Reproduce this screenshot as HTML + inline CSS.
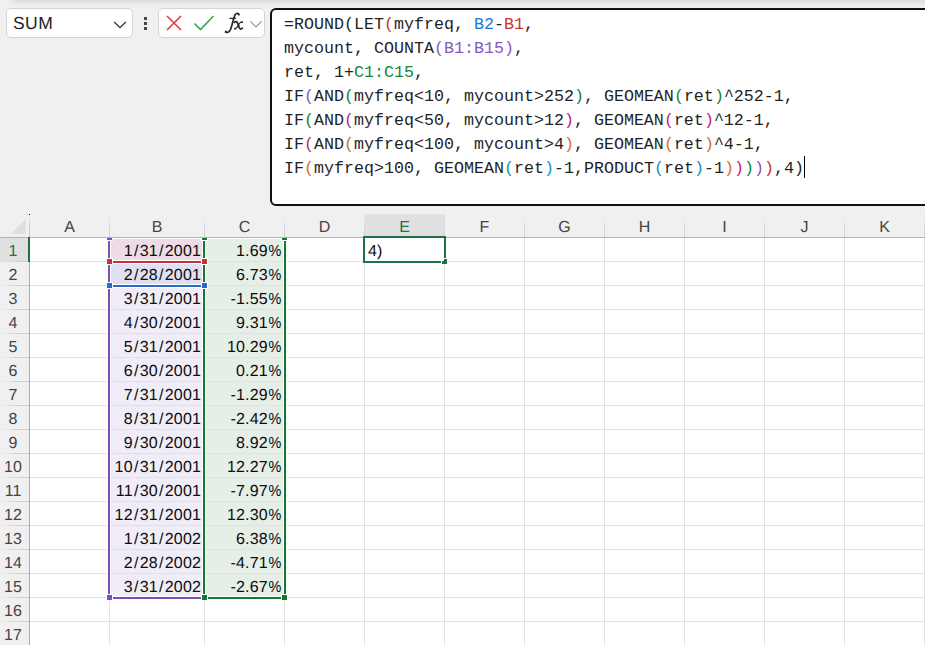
<!DOCTYPE html>
<html><head><meta charset="utf-8"><title>Excel</title>
<style>
html,body{margin:0;padding:0;}
body{width:925px;height:645px;overflow:hidden;background:#f0f0f0;position:relative;font-family:"Liberation Sans",sans-serif;}
.abs{position:absolute;}
.box{position:absolute;background:#fff;border:1px solid #d4d4d4;border-radius:5px;box-sizing:border-box;}
#fbar{position:absolute;left:270px;top:8px;width:680px;height:198px;background:#fff;border:2px solid #111;border-radius:6px;box-sizing:border-box;}
#ftext{position:absolute;left:284px;top:13px;font-family:"Liberation Mono",monospace;font-size:16.67px;line-height:24px;color:#1f1f1f;white-space:pre;}
#grid{position:absolute;left:0;top:214px;width:925px;height:431px;}
.ch{position:absolute;top:214px;height:23px;line-height:27px;text-rendering:geometricPrecision;text-align:center;font-size:16px;color:#444;}
.rh{position:absolute;left:0;width:29px;height:24px;line-height:27px;text-rendering:geometricPrecision;font-size:16px;color:#444;text-align:left;}
.cell{position:absolute;height:24px;line-height:27px;text-rendering:geometricPrecision;font-size:16px;letter-spacing:0.15px;color:#0c0c0c;text-align:right;white-space:nowrap;}
.sl{margin:0 1.2px}
.pc{display:inline-block;transform:scaleX(0.9);transform-origin:right center;margin-left:-1px;letter-spacing:0}
.vl{position:absolute;width:1px;background:#e1e1e1;}
.hl{position:absolute;height:1px;background:#e1e1e1;}
.p1{color:#c0392b}.c-blue{color:#2f6fc4}.c-red{color:#c0392b}.c-pur{color:#8e5bbd}.c-grn{color:#1e8a3c}
</style></head><body>

<div class="abs" style="left:12px;top:-12px;width:930px;height:12px;border-radius:8px;box-shadow:0 0 7px 1px rgba(0,0,0,0.14)"></div>
<div class="box" style="left:6px;top:8px;width:127px;height:30px;"></div>
<div class="abs" style="left:13px;top:12px;font-size:17.5px;text-rendering:geometricPrecision;letter-spacing:0.45px;line-height:22px;color:#222;">SUM</div>
<svg class="abs" style="left:111px;top:17.5px" width="18" height="12" viewBox="0 0 18 12"><path d="M3.2 4 L9 9.6 L14.8 4" fill="none" stroke="#333" stroke-width="1.3"/></svg>
<div class="abs" style="left:144px;top:17px;width:3px;height:3px;background:#444"></div>
<div class="abs" style="left:144px;top:22px;width:3px;height:3px;background:#444"></div>
<div class="abs" style="left:144px;top:27px;width:3px;height:3px;background:#444"></div>
<div class="box" style="left:158px;top:8px;width:107px;height:30px;"></div>
<svg class="abs" style="left:164px;top:13px" width="20" height="20" viewBox="0 0 20 20"><path d="M3 3 L17 17 M17 3 L3 17" fill="none" stroke="#e63c3c" stroke-width="1.6"/></svg>
<svg class="abs" style="left:192px;top:13px" width="24" height="20" viewBox="0 0 24 20"><path d="M2.5 10.5 L8.5 16.5 L21.5 3" fill="none" stroke="#3aa44d" stroke-width="1.6"/></svg>
<svg class="abs" style="left:220px;top:8px" width="28" height="30" viewBox="0 0 28 30" fill="none" stroke="#2b2b2b" stroke-linecap="round" stroke-linejoin="round"><path d="M18.9 6.6 C18.3 4.9 16 4.7 14.9 7.2 C13.9 9.6 12 17 10.7 21 C9.7 24 7.6 25.2 5.6 23.9" stroke-width="1.75"/><circle cx="18.7" cy="6.4" r="0.9" fill="#2b2b2b" stroke="none"/><circle cx="5.9" cy="23.6" r="1" fill="#2b2b2b" stroke="none"/><path d="M9.9 10.4 L15.6 10.4" stroke-width="1.1"/><path d="M14.4 14.3 C15.8 13.1 17 13.5 17.7 15.4 L19.3 19.6 C20 21.3 21 21.5 22.4 20.2" stroke-width="1.8"/><path d="M22.3 14.1 C21 13.3 20 14.5 18.5 17 C17 19.6 16 21.5 14.6 20.8" stroke-width="1.1"/><circle cx="22.1" cy="14.2" r="0.9" fill="#2b2b2b" stroke="none"/><circle cx="14.9" cy="20.6" r="0.9" fill="#2b2b2b" stroke="none"/></svg>
<svg class="abs" style="left:248px;top:18px" width="16" height="12" viewBox="0 0 16 12"><path d="M2.5 3.5 L8 9 L13.5 3.5" fill="none" stroke="#9a9a9a" stroke-width="1.2"/></svg>
<div id="fbar"></div>
<div id="ftext">=ROUND(LET<span style="color:#cc3535">(</span>myfreq, <span style="color:#1c78d0">B2</span>-<span style="color:#cc3535">B1</span>,
mycount, COUNTA<span style="color:#8859bd">(B1:B15)</span>,
ret, 1+<span style="color:#16853a">C1:C15</span>,
IF<span style="color:#8859bd">(</span>AND<span style="color:#16853a">(</span>myfreq&lt;10, mycount&gt;252<span style="color:#16853a">)</span>, GEOMEAN<span style="color:#16853a">(</span>ret<span style="color:#16853a">)</span>^252-1,
IF<span style="color:#16853a">(</span>AND<span style="color:#c41c8c">(</span>myfreq&lt;50, mycount&gt;12<span style="color:#c41c8c">)</span>, GEOMEAN<span style="color:#c41c8c">(</span>ret<span style="color:#c41c8c">)</span>^12-1,
IF<span style="color:#c41c8c">(</span>AND<span style="color:#d07034">(</span>myfreq&lt;100, mycount&gt;4<span style="color:#d07034">)</span>, GEOMEAN<span style="color:#d07034">(</span>ret<span style="color:#d07034">)</span>^4-1,
IF<span style="color:#d07034">(</span>myfreq&gt;100, GEOMEAN<span style="color:#1492b8">(</span>ret<span style="color:#1492b8">)</span>-1,PRODUCT<span style="color:#1492b8">(</span>ret<span style="color:#1492b8">)</span>-1<span style="color:#d07034">)</span><span style="color:#c41c8c">)</span><span style="color:#16853a">)</span><span style="color:#8859bd">)</span><span style="color:#cc3535">)</span>,4)</div>
<div class="abs" style="left:804px;top:156px;width:1px;height:22px;background:#000"></div>
<div class="abs" style="left:30px;top:238px;width:895px;height:407px;background:#fff"></div>
<div class="abs" style="left:0;top:238px;width:28px;height:24px;background:#e0e0e0"></div>
<div class="abs" style="left:365px;top:214px;width:80px;height:23px;background:#e0e0e0"></div>
<div class="abs" style="left:111px;top:239px;width:91px;height:357px;background:#f0ecf8"></div>
<div class="abs" style="left:111px;top:239px;width:91px;height:22px;background:#eddbe5"></div>
<div class="abs" style="left:111px;top:263px;width:91px;height:22px;background:#dfe0f2"></div>
<div class="abs" style="left:206px;top:239px;width:77px;height:357px;background:#e6efe7"></div>
<div class="vl" style="left:109px;top:238px;height:407px"></div>
<div class="vl" style="left:204px;top:238px;height:407px"></div>
<div class="vl" style="left:284px;top:238px;height:407px"></div>
<div class="vl" style="left:364px;top:238px;height:407px"></div>
<div class="vl" style="left:444px;top:238px;height:407px"></div>
<div class="vl" style="left:524px;top:238px;height:407px"></div>
<div class="vl" style="left:604px;top:238px;height:407px"></div>
<div class="vl" style="left:684px;top:238px;height:407px"></div>
<div class="vl" style="left:764px;top:238px;height:407px"></div>
<div class="vl" style="left:844px;top:238px;height:407px"></div>
<div class="vl" style="left:924px;top:238px;height:407px"></div>
<div class="hl" style="left:30px;top:261px;width:895px"></div>
<div class="hl" style="left:0px;top:261px;width:29px;background:linear-gradient(to right,rgba(205,205,205,0),#d6d6d6 50%,#c8c8c8)"></div>
<div class="hl" style="left:30px;top:285px;width:895px"></div>
<div class="hl" style="left:0px;top:285px;width:29px;background:linear-gradient(to right,rgba(205,205,205,0),#d6d6d6 50%,#c8c8c8)"></div>
<div class="hl" style="left:30px;top:309px;width:895px"></div>
<div class="hl" style="left:0px;top:309px;width:29px;background:linear-gradient(to right,rgba(205,205,205,0),#d6d6d6 50%,#c8c8c8)"></div>
<div class="hl" style="left:30px;top:333px;width:895px"></div>
<div class="hl" style="left:0px;top:333px;width:29px;background:linear-gradient(to right,rgba(205,205,205,0),#d6d6d6 50%,#c8c8c8)"></div>
<div class="hl" style="left:30px;top:357px;width:895px"></div>
<div class="hl" style="left:0px;top:357px;width:29px;background:linear-gradient(to right,rgba(205,205,205,0),#d6d6d6 50%,#c8c8c8)"></div>
<div class="hl" style="left:30px;top:381px;width:895px"></div>
<div class="hl" style="left:0px;top:381px;width:29px;background:linear-gradient(to right,rgba(205,205,205,0),#d6d6d6 50%,#c8c8c8)"></div>
<div class="hl" style="left:30px;top:405px;width:895px"></div>
<div class="hl" style="left:0px;top:405px;width:29px;background:linear-gradient(to right,rgba(205,205,205,0),#d6d6d6 50%,#c8c8c8)"></div>
<div class="hl" style="left:30px;top:429px;width:895px"></div>
<div class="hl" style="left:0px;top:429px;width:29px;background:linear-gradient(to right,rgba(205,205,205,0),#d6d6d6 50%,#c8c8c8)"></div>
<div class="hl" style="left:30px;top:453px;width:895px"></div>
<div class="hl" style="left:0px;top:453px;width:29px;background:linear-gradient(to right,rgba(205,205,205,0),#d6d6d6 50%,#c8c8c8)"></div>
<div class="hl" style="left:30px;top:477px;width:895px"></div>
<div class="hl" style="left:0px;top:477px;width:29px;background:linear-gradient(to right,rgba(205,205,205,0),#d6d6d6 50%,#c8c8c8)"></div>
<div class="hl" style="left:30px;top:501px;width:895px"></div>
<div class="hl" style="left:0px;top:501px;width:29px;background:linear-gradient(to right,rgba(205,205,205,0),#d6d6d6 50%,#c8c8c8)"></div>
<div class="hl" style="left:30px;top:525px;width:895px"></div>
<div class="hl" style="left:0px;top:525px;width:29px;background:linear-gradient(to right,rgba(205,205,205,0),#d6d6d6 50%,#c8c8c8)"></div>
<div class="hl" style="left:30px;top:549px;width:895px"></div>
<div class="hl" style="left:0px;top:549px;width:29px;background:linear-gradient(to right,rgba(205,205,205,0),#d6d6d6 50%,#c8c8c8)"></div>
<div class="hl" style="left:30px;top:573px;width:895px"></div>
<div class="hl" style="left:0px;top:573px;width:29px;background:linear-gradient(to right,rgba(205,205,205,0),#d6d6d6 50%,#c8c8c8)"></div>
<div class="hl" style="left:30px;top:597px;width:895px"></div>
<div class="hl" style="left:0px;top:597px;width:29px;background:linear-gradient(to right,rgba(205,205,205,0),#d6d6d6 50%,#c8c8c8)"></div>
<div class="hl" style="left:30px;top:621px;width:895px"></div>
<div class="hl" style="left:0px;top:621px;width:29px;background:linear-gradient(to right,rgba(205,205,205,0),#d6d6d6 50%,#c8c8c8)"></div>
<div class="hl" style="left:30px;top:645px;width:895px"></div>
<div class="hl" style="left:0px;top:645px;width:29px;background:linear-gradient(to right,rgba(205,205,205,0),#d6d6d6 50%,#c8c8c8)"></div>
<div class="abs" style="left:29px;top:238px;width:1px;height:407px;background:#ababab"></div>
<div class="abs" style="left:109px;top:214px;width:1px;height:23px;background:linear-gradient(rgba(210,210,210,0),#d8d8d8 60%,#d0d0d0)"></div>
<div class="abs" style="left:204px;top:214px;width:1px;height:23px;background:linear-gradient(rgba(210,210,210,0),#d8d8d8 60%,#d0d0d0)"></div>
<div class="abs" style="left:284px;top:214px;width:1px;height:23px;background:linear-gradient(rgba(210,210,210,0),#d8d8d8 60%,#d0d0d0)"></div>
<div class="abs" style="left:364px;top:214px;width:1px;height:23px;background:linear-gradient(rgba(210,210,210,0),#d8d8d8 60%,#d0d0d0)"></div>
<div class="abs" style="left:444px;top:214px;width:1px;height:23px;background:linear-gradient(rgba(210,210,210,0),#d8d8d8 60%,#d0d0d0)"></div>
<div class="abs" style="left:524px;top:214px;width:1px;height:23px;background:linear-gradient(rgba(210,210,210,0),#d8d8d8 60%,#d0d0d0)"></div>
<div class="abs" style="left:604px;top:214px;width:1px;height:23px;background:linear-gradient(rgba(210,210,210,0),#d8d8d8 60%,#d0d0d0)"></div>
<div class="abs" style="left:684px;top:214px;width:1px;height:23px;background:linear-gradient(rgba(210,210,210,0),#d8d8d8 60%,#d0d0d0)"></div>
<div class="abs" style="left:764px;top:214px;width:1px;height:23px;background:linear-gradient(rgba(210,210,210,0),#d8d8d8 60%,#d0d0d0)"></div>
<div class="abs" style="left:844px;top:214px;width:1px;height:23px;background:linear-gradient(rgba(210,210,210,0),#d8d8d8 60%,#d0d0d0)"></div>
<div class="abs" style="left:924px;top:214px;width:1px;height:23px;background:linear-gradient(rgba(210,210,210,0),#d8d8d8 60%,#d0d0d0)"></div>
<div class="abs" style="left:0;top:237px;width:925px;height:1px;background:#b4b4b4"></div>
<div class="abs" style="left:29px;top:215px;width:1px;height:22px;background:linear-gradient(rgba(200,200,200,0),#cfcfcf 50%,#c4c4c4)"></div>
<svg class="abs" style="left:10px;top:217px" width="18" height="18" viewBox="0 0 18 18"><path d="M16 1.5 L16 17 L0.8 17 Z" fill="#e0e0e0"/></svg>
<div class="abs" style="left:29px;top:214px;width:1px;height:1px;background:#000"></div>
<div class="ch" style="left:30px;width:79px;color:#444">A</div>
<div class="ch" style="left:110px;width:94px;color:#444">B</div>
<div class="ch" style="left:205px;width:79px;color:#444">C</div>
<div class="ch" style="left:285px;width:79px;color:#444">D</div>
<div class="ch" style="left:365px;width:79px;color:#217346">E</div>
<div class="ch" style="left:445px;width:79px;color:#444">F</div>
<div class="ch" style="left:525px;width:79px;color:#444">G</div>
<div class="ch" style="left:605px;width:79px;color:#444">H</div>
<div class="ch" style="left:685px;width:79px;color:#444">I</div>
<div class="ch" style="left:765px;width:79px;color:#444">J</div>
<div class="ch" style="left:845px;width:79px;color:#444">K</div>
<div class="rh" style="top:238px;color:#217346;width:26px;text-align:center">1</div>
<div class="rh" style="top:262px;color:#444;width:26px;text-align:center">2</div>
<div class="rh" style="top:286px;color:#444;width:26px;text-align:center">3</div>
<div class="rh" style="top:310px;color:#444;width:26px;text-align:center">4</div>
<div class="rh" style="top:334px;color:#444;width:26px;text-align:center">5</div>
<div class="rh" style="top:358px;color:#444;width:26px;text-align:center">6</div>
<div class="rh" style="top:382px;color:#444;width:26px;text-align:center">7</div>
<div class="rh" style="top:406px;color:#444;width:26px;text-align:center">8</div>
<div class="rh" style="top:430px;color:#444;width:26px;text-align:center">9</div>
<div class="rh" style="top:454px;color:#444;width:26px;text-align:center">10</div>
<div class="rh" style="top:478px;color:#444;width:26px;text-align:center">11</div>
<div class="rh" style="top:502px;color:#444;width:26px;text-align:center">12</div>
<div class="rh" style="top:526px;color:#444;width:26px;text-align:center">13</div>
<div class="rh" style="top:550px;color:#444;width:26px;text-align:center">14</div>
<div class="rh" style="top:574px;color:#444;width:26px;text-align:center">15</div>
<div class="rh" style="top:598px;color:#444;width:26px;text-align:center">16</div>
<div class="rh" style="top:622px;color:#444;width:26px;text-align:center">17</div>
<div class="cell" style="left:110px;width:91px;top:238px">1<span class="sl">/</span>31<span class="sl">/</span>2001</div>
<div class="cell" style="left:205px;width:76px;top:238px">1.69<span class="pc">%</span></div>
<div class="cell" style="left:110px;width:91px;top:262px">2<span class="sl">/</span>28<span class="sl">/</span>2001</div>
<div class="cell" style="left:205px;width:76px;top:262px">6.73<span class="pc">%</span></div>
<div class="cell" style="left:110px;width:91px;top:286px">3<span class="sl">/</span>31<span class="sl">/</span>2001</div>
<div class="cell" style="left:205px;width:76px;top:286px">-1.55<span class="pc">%</span></div>
<div class="cell" style="left:110px;width:91px;top:310px">4<span class="sl">/</span>30<span class="sl">/</span>2001</div>
<div class="cell" style="left:205px;width:76px;top:310px">9.31<span class="pc">%</span></div>
<div class="cell" style="left:110px;width:91px;top:334px">5<span class="sl">/</span>31<span class="sl">/</span>2001</div>
<div class="cell" style="left:205px;width:76px;top:334px">10.29<span class="pc">%</span></div>
<div class="cell" style="left:110px;width:91px;top:358px">6<span class="sl">/</span>30<span class="sl">/</span>2001</div>
<div class="cell" style="left:205px;width:76px;top:358px">0.21<span class="pc">%</span></div>
<div class="cell" style="left:110px;width:91px;top:382px">7<span class="sl">/</span>31<span class="sl">/</span>2001</div>
<div class="cell" style="left:205px;width:76px;top:382px">-1.29<span class="pc">%</span></div>
<div class="cell" style="left:110px;width:91px;top:406px">8<span class="sl">/</span>31<span class="sl">/</span>2001</div>
<div class="cell" style="left:205px;width:76px;top:406px">-2.42<span class="pc">%</span></div>
<div class="cell" style="left:110px;width:91px;top:430px">9<span class="sl">/</span>30<span class="sl">/</span>2001</div>
<div class="cell" style="left:205px;width:76px;top:430px">8.92<span class="pc">%</span></div>
<div class="cell" style="left:110px;width:91px;top:454px">10<span class="sl">/</span>31<span class="sl">/</span>2001</div>
<div class="cell" style="left:205px;width:76px;top:454px">12.27<span class="pc">%</span></div>
<div class="cell" style="left:110px;width:91px;top:478px">11<span class="sl">/</span>30<span class="sl">/</span>2001</div>
<div class="cell" style="left:205px;width:76px;top:478px">-7.97<span class="pc">%</span></div>
<div class="cell" style="left:110px;width:91px;top:502px">12<span class="sl">/</span>31<span class="sl">/</span>2001</div>
<div class="cell" style="left:205px;width:76px;top:502px">12.30<span class="pc">%</span></div>
<div class="cell" style="left:110px;width:91px;top:526px">1<span class="sl">/</span>31<span class="sl">/</span>2002</div>
<div class="cell" style="left:205px;width:76px;top:526px">6.38<span class="pc">%</span></div>
<div class="cell" style="left:110px;width:91px;top:550px">2<span class="sl">/</span>28<span class="sl">/</span>2002</div>
<div class="cell" style="left:205px;width:76px;top:550px">-4.71<span class="pc">%</span></div>
<div class="cell" style="left:110px;width:91px;top:574px">3<span class="sl">/</span>31<span class="sl">/</span>2002</div>
<div class="cell" style="left:205px;width:76px;top:574px">-2.67<span class="pc">%</span></div>
<div class="cell" style="left:368px;top:238px;text-align:left">4)</div>
<div class="abs" style="left:107px;top:238px;width:4px;height:361px;background:#fff"></div>
<div class="abs" style="left:202px;top:238px;width:4px;height:361px;background:#fff"></div>
<div class="abs" style="left:283px;top:238px;width:4px;height:361px;background:#fff"></div>
<div class="abs" style="left:110px;top:596px;width:93px;height:4px;background:#fff"></div>
<div class="abs" style="left:205px;top:596px;width:79px;height:4px;background:#fff"></div>
<div class="abs" style="left:110px;top:260px;width:93px;height:4px;background:#fff"></div>
<div class="abs" style="left:110px;top:284px;width:93px;height:4px;background:#fff"></div>
<div class="abs" style="left:108px;top:238px;width:2px;height:360px;background:#7b4db6"></div>
<div class="abs" style="left:108px;top:597px;width:95px;height:2px;background:#7b4db6"></div>
<div class="abs" style="left:112px;top:261px;width:89px;height:2px;background:#c4303c"></div>
<div class="abs" style="left:112px;top:285px;width:89px;height:2px;background:#2f66cc"></div>
<div class="abs" style="left:203px;top:238px;width:2px;height:360px;background:#117a2e"></div>
<div class="abs" style="left:284px;top:238px;width:2px;height:360px;background:#117a2e"></div>
<div class="abs" style="left:203px;top:597px;width:83px;height:2px;background:#117a2e"></div>
<div class="abs" style="left:106px;top:238px;width:7px;height:3px;background:#fff"></div>
<div class="abs" style="left:107px;top:238px;width:5px;height:2px;background:#7b4db6"></div>
<div class="abs" style="left:201px;top:238px;width:7px;height:3px;background:#fff"></div>
<div class="abs" style="left:202px;top:238px;width:5px;height:2px;background:#117a2e"></div>
<div class="abs" style="left:281px;top:238px;width:7px;height:3px;background:#fff"></div>
<div class="abs" style="left:282px;top:238px;width:5px;height:2px;background:#117a2e"></div>
<div class="abs" style="left:106px;top:258px;width:7px;height:7px;background:#fff"></div>
<div class="abs" style="left:107px;top:259px;width:5px;height:5px;background:#c4303c"></div>
<div class="abs" style="left:201px;top:258px;width:7px;height:7px;background:#fff"></div>
<div class="abs" style="left:202px;top:259px;width:5px;height:5px;background:#c4303c"></div>
<div class="abs" style="left:106px;top:282px;width:7px;height:7px;background:#fff"></div>
<div class="abs" style="left:107px;top:283px;width:5px;height:5px;background:#2f66cc"></div>
<div class="abs" style="left:201px;top:282px;width:7px;height:7px;background:#fff"></div>
<div class="abs" style="left:202px;top:283px;width:5px;height:5px;background:#2f66cc"></div>
<div class="abs" style="left:106px;top:594px;width:7px;height:7px;background:#fff"></div>
<div class="abs" style="left:107px;top:595px;width:5px;height:5px;background:#7b4db6"></div>
<div class="abs" style="left:201px;top:594px;width:7px;height:7px;background:#fff"></div>
<div class="abs" style="left:202px;top:595px;width:5px;height:5px;background:#117a2e"></div>
<div class="abs" style="left:281px;top:594px;width:7px;height:7px;background:#fff"></div>
<div class="abs" style="left:282px;top:595px;width:5px;height:5px;background:#117a2e"></div>
<div class="abs" style="left:28px;top:237px;width:2px;height:25px;background:#1e7145"></div>
<div class="abs" style="left:363px;top:236px;width:83px;height:27px;border:2px solid #1e7145;box-sizing:border-box"></div>
<div class="abs" style="left:441px;top:258px;width:6px;height:6px;background:#fff"></div>
<div class="abs" style="left:442px;top:259px;width:5px;height:5px;background:#1e7145"></div>
<div class="abs" style="left:442px;top:259px;width:2px;height:2px;background:#fff"></div>
</body></html>
